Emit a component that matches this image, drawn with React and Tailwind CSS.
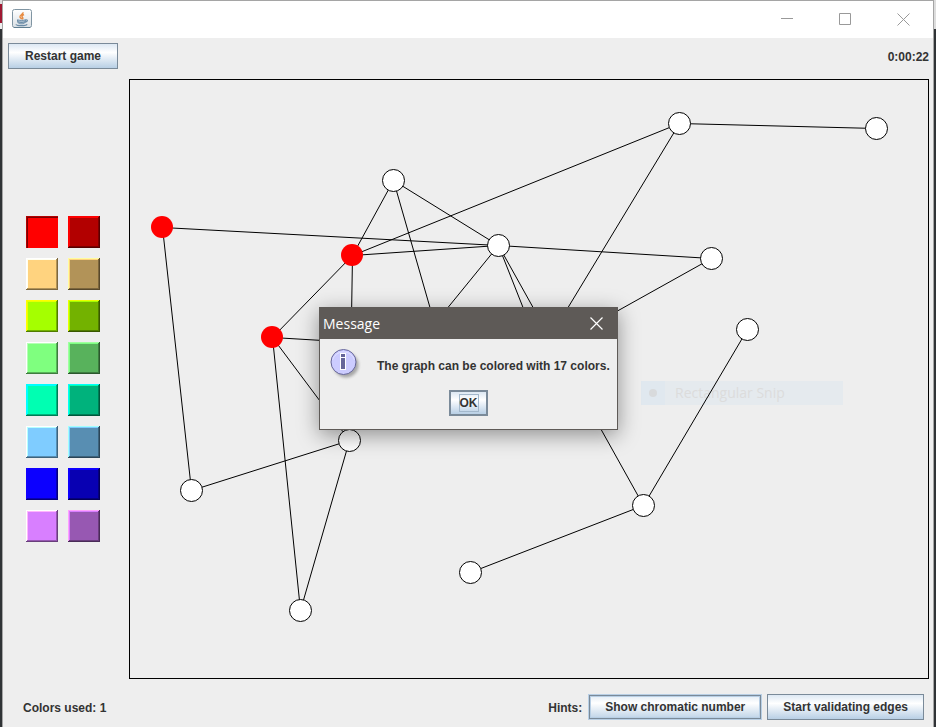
import React from "react";

const swatches = [
  { name: "Red", cls: "bg-[#ff0000] [--lo:#7c0000] [--lo2:#b20000] [--hi:#ff0000] [--hi2:#ff0000]", pressed: true },
  { name: "Dark red", cls: "bg-[#b20000] [--hi:#fe0000] [--hi2:#fe0000] [--lo:#570000] [--lo2:#7c0000]" },
  { name: "Sand", cls: "bg-[#ffd37f] [--hi:#ffffff] [--hi2:#fffff0] [--lo:#7c673e] [--lo2:#b29358]" },
  { name: "Dark sand", cls: "bg-[#b29358] [--hi:#fffca0] [--hi2:#fed27e] [--lo:#57482b] [--lo2:#7c663d]" },
  { name: "Lime", cls: "bg-[#a5ff00] [--hi:#ffff00] [--hi2:#ebff00] [--lo:#507c00] [--lo2:#73b200]" },
  { name: "Dark lime", cls: "bg-[#73b200] [--hi:#ebff00] [--hi2:#a4fe00] [--lo:#385700] [--lo2:#507c00]" },
  { name: "Green", cls: "bg-[#7fff7f] [--hi:#ffffff] [--hi2:#b5ffb5] [--lo:#3e7c3e] [--lo2:#58b258]" },
  { name: "Dark green", cls: "bg-[#58b25c] [--hi:#a0ffa0] [--hi2:#7efe83] [--lo:#2b572d] [--lo2:#3d7c40]" },
  { name: "Mint", cls: "bg-[#00ffb2] [--hi:#00ffff] [--hi2:#00ffff] [--lo:#007c56] [--lo2:#00b27c]" },
  { name: "Dark mint", cls: "bg-[#00b27c] [--hi:#00fffc] [--hi2:#00feb1] [--lo:#00573c] [--lo2:#007c56]" },
  { name: "Sky", cls: "bg-[#7fccff] [--hi:#ffffff] [--hi2:#b5ffff] [--lo:#3e637c] [--lo2:#588eb2]" },
  { name: "Dark sky", cls: "bg-[#588eb2] [--hi:#a0ffff] [--hi2:#7ecbfe] [--lo:#2b4557] [--lo2:#3d637c]" },
  { name: "Blue", cls: "bg-[#0c00ff] [--hi:#1100ff] [--hi2:#1100ff] [--lo:#05007c] [--lo2:#0800b2]" },
  { name: "Dark blue", cls: "bg-[#0800b2] [--hi:#0f00ff] [--hi2:#0b00fe] [--lo:#030057] [--lo2:#05007c]" },
  { name: "Violet", cls: "bg-[#d87fff] [--hi:#ffffff] [--hi2:#ffb5ff] [--lo:#693e7c] [--lo2:#9758b2]" },
  { name: "Dark violet", cls: "bg-[#9758b2] [--hi:#ffa0ff] [--hi2:#d77efe] [--lo:#492b57] [--lo2:#693d7c]" },
];

const edges = [
  [32, 147, 368, 165], [32, 147, 61, 410], [222, 175, 263, 100], [222, 175, 549, 43],
  [222, 175, 368, 165], [222, 175, 142, 257], [222, 175, 219, 360], [142, 257, 219, 360],
  [142, 257, 170, 530], [142, 257, 360, 270], [263, 100, 368, 165], [263, 100, 319, 295],
  [368, 165, 280, 273], [368, 165, 419, 294], [368, 165, 513, 425], [368, 165, 581, 178],
  [549, 43, 746, 48], [549, 43, 400, 289], [581, 178, 400, 279], [617, 249, 513, 425],
  [513, 425, 340, 492], [219, 360, 61, 410], [219, 360, 170, 530],
];

const nodes = [
  [263, 100], [368, 165], [549, 43], [746, 48], [581, 178], [617, 249],
  [513, 425], [340, 492], [219, 360], [61, 410], [170, 530],
];

const redNodes = [[32, 147], [222, 175], [142, 257]];

const metal = "bg-linear-to-b from-[#dde8f3] via-white via-35% to-[#b8cfe5] font-bold text-[#333]";

function Swatch({ name, cls, pressed = false }) {
  const bevel = pressed
    ? "shadow-[inset_1px_1px_0_var(--lo2),inset_2px_2px_0_var(--lo)]"
    : "shadow-[inset_-1px_-1px_0_var(--lo),inset_1px_1px_0_var(--hi),inset_-2px_-2px_0_var(--lo2),inset_2px_2px_0_var(--hi2)]";
  return <button aria-label={name} aria-pressed={pressed} className={`size-8 ${bevel} ${cls}`} />;
}

function JavaIcon() {
  return (
    <svg width="20" height="20" viewBox="0 0 20 20" fill="none" aria-hidden="true">
      <defs>
        <linearGradient id="tile" x1="0" y1="0" x2="0" y2="1">
          <stop offset="0" stopColor="#ffffff" />
          <stop offset="1" stopColor="#d9dfe4" />
        </linearGradient>
      </defs>
      <rect x=".5" y=".5" width="19" height="18" rx="2" fill="url(#tile)" stroke="#8095a3" />
      <path d="M2 18.5h16" stroke="#607e91" />
      <path d="M11 3.300c.6 1.700-3.600 2.700-3 4.700.3.900 1.300 1.400 1.800 2.200M12 5.500c-2 1-2.600 1.900-1.600 2.800.7.700.5 1.300-.2 1.900" stroke="#e88b40" strokeWidth="1.500" />
      <path d="M5.500 10.800c0 3.500 1.200 4 4 4s3.800-.5 4-4c-2 .8-6 .8-8 0z" fill="#b7c7d6" stroke="#6a8ba6" />
      <path d="M6 12.700c2 .7 5 .7 7 0M13.500 10.800c2.600-.4 2.600 1.900-.4 2.400M4.300 15.200c-.8 2 10.400 2 10.700 0" stroke="#6a8ba6" strokeWidth="1.200" />
    </svg>
  );
}

function InfoIcon() {
  return (
    <svg width="32" height="32" viewBox="0 0 32 32" className="shrink-0" aria-hidden="true">
      <defs>
        <filter id="soft" x="-20%" y="-20%" width="150%" height="150%">
          <feGaussianBlur stdDeviation="1.500" />
        </filter>
      </defs>
      <circle cx="16" cy="16" r="12.500" fill="#777" opacity=".6" filter="url(#soft)" />
      <circle cx="13.500" cy="13" r="12.500" fill="#ccccff" stroke="#666699" />
      <path d="M2.500 11a11.500 11.500 0 0 1 22 0" fill="none" stroke="#e2e2ff" />
      <path d="M10 4h6v17h-6z" fill="#fff" />
      <path d="M11 5h4v3h-4zM11 9h4v11h-4z" fill="#666699" />
    </svg>
  );
}

function Graph() {
  return (
    <svg viewBox="0 0 798 598" className="block h-full w-full" role="img" aria-label="Graph">
      <g transform="translate(.5 .5)" stroke="#000">
        {edges.map(([x1, y1, x2, y2], i) => (
          <line key={i} x1={x1} y1={y1} x2={x2} y2={y2} />
        ))}
        {nodes.map(([x, y], i) => (
          <circle key={i} cx={x} cy={y} r="11" fill="#fff" />
        ))}
      </g>
      {redNodes.map(([x, y], i) => (
        <circle key={i} cx={x} cy={y} r="11" fill="#f00" />
      ))}
    </svg>
  );
}

function Dialog() {
  return (
    <section
      role="dialog"
      aria-label="Message"
      className="absolute top-[227px] left-[189px] w-[299px] border border-[#5e5a57] bg-[#eee] shadow-[0_5px_20px_rgba(0,0,0,0.4)]"
    >
      <header className="flex h-[31px] items-center justify-between bg-[#5e5a57] pr-3.5 pl-[3px] text-white">
        <h2 className="font-['Open_Sans','Noto_Sans',sans-serif] text-sm">Message</h2>
        <button aria-label="Close message">
          <svg width="13" height="13" viewBox="0 0 13 13" stroke="#fff" strokeWidth="1.200" aria-hidden="true">
            <path d="M.5.5l12 12M12.500.5l-12 12" />
          </svg>
        </button>
      </header>
      <div className="flex flex-col items-center pb-[13px]">
        <div className="flex w-full items-start gap-[15px] pt-2.5 pl-2.5">
          <InfoIcon />
          <p className="pt-[9px] font-bold whitespace-nowrap">The graph can be colored with 17 colors.</p>
        </div>
        <button className={`mt-[9px] flex h-[26px] w-[39px] items-center justify-center border-2 border-[#7a8a99] ${metal}`}>
          <span className="border border-[#a3b8cc] leading-4">OK</span>
        </button>
      </div>
    </section>
  );
}

export default function App() {
  return (
    <div className="flex min-h-screen bg-[#eee] font-['Liberation_Sans',Arial,sans-serif] text-xs text-[#333]">
      <div className="flex w-0.5 flex-col bg-[#303336]">
        <div className="h-[29px] border-t-4 border-b-[6px] border-t-[#ddd] border-b-[#eee] bg-[#a01832]" />
      </div>
      <div className="flex flex-1 flex-col border-x border-t border-[#a5a5a5]">
        <header className="flex h-[37px] items-center justify-between bg-white pr-[23px] pb-px pl-[9px]">
          <JavaIcon />
          <div className="flex items-center gap-[46px] text-[#999]">
            <button aria-label="Minimize">
              <svg width="12" height="13" stroke="currentColor" aria-hidden="true"><path d="M0 5.500h12" /></svg>
            </button>
            <button aria-label="Maximize">
              <svg width="12" height="13" fill="none" stroke="currentColor" aria-hidden="true"><path d="M.5.5h11v11H.5z" /></svg>
            </button>
            <button aria-label="Close">
              <svg width="13" height="13" stroke="currentColor" aria-hidden="true"><path d="M.5.5l12 12M12.500.5l-12 12" /></svg>
            </button>
          </div>
        </header>
        <div className="flex items-center justify-between py-[5px] pr-1 pl-[5px]">
          <button className={`h-[26px] border border-[#7a8a99] px-4 ${metal}`}>Restart game</button>
          <time className="pt-px font-bold">0:00:22</time>
        </div>
        <main className="flex pt-[5px] pr-1">
          <aside className="flex w-[126px] shrink-0 items-center pl-[23px]">
            <div className="grid grid-cols-2 gap-2.5">
              {swatches.map((s) => <Swatch key={s.name} {...s} />)}
            </div>
          </aside>
          <div className="relative aspect-4/3 flex-1 border border-black">
            <div className="absolute top-[301px] left-[511px] flex h-6 w-[202px] items-center bg-[#e5eaee] font-['Open_Sans','Noto_Sans',sans-serif] text-sm text-[#dcdcdc]">
              <span className="flex h-full w-6 items-center justify-center bg-[#e0e8ef]">
                <i className="size-2 rounded-full bg-[#d8dadc]" />
              </span>
              <span className="pl-2.5">Rectangular Snip</span>
            </div>
            <div className="relative h-full">
              <Graph />
            </div>
            <Dialog />
          </div>
        </main>
        <footer className="flex items-center justify-between pt-[15px] pr-[9px] pb-1.5 pl-5 font-bold">
          <p className="pt-px">Colors used: 1</p>
          <div className="flex items-center">
            <span className="pt-px pr-1.5">Hints:</span>
            <button className={`h-[26px] px-[17px] shadow-[inset_0_0_0_1px_#b8cfe5,inset_0_0_0_2px_#7a8a99,inset_0_0_0_3px_#b8cfe5] ${metal}`}>Show chromatic number</button>
            <button className={`ml-[5px] h-[26px] border border-[#7a8a99] px-[15px] ${metal}`}>Start validating edges</button>
          </div>
        </footer>
      </div>
      <div className="flex w-0.5 flex-col bg-[#303336]">
        <div className="h-[29px] bg-[#ddd]" />
      </div>
    </div>
  );
}
